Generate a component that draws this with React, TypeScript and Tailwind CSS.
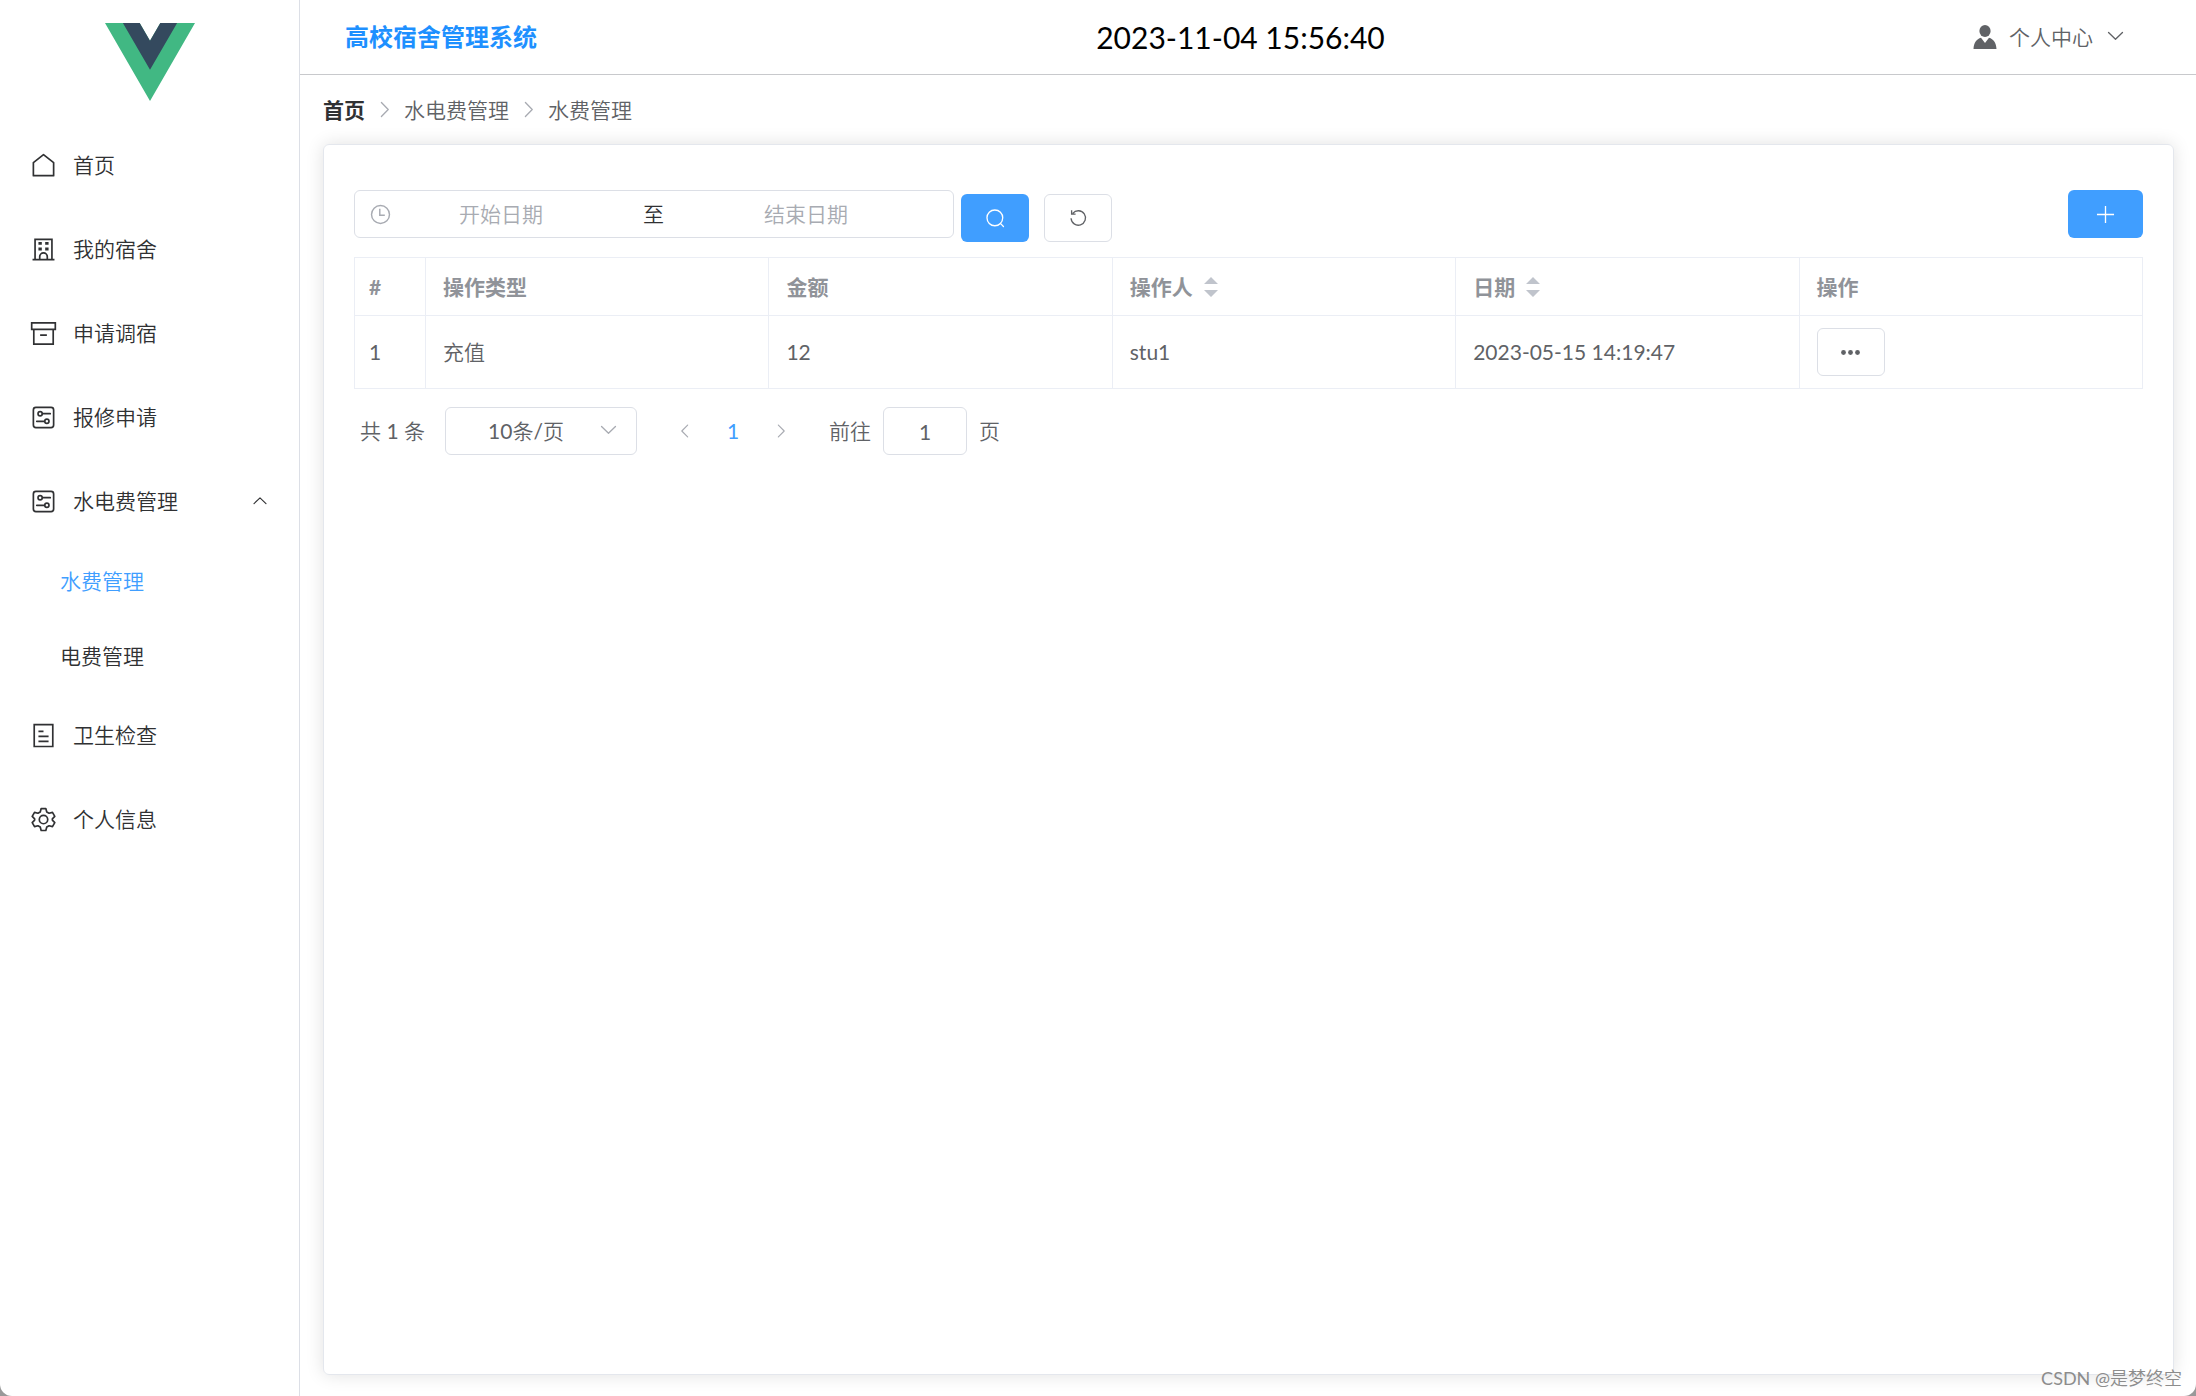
import { useState } from 'react';
import type { ReactNode } from 'react';

interface IconProps {
  children: ReactNode;
  className?: string;
  width?: number;
}

// 1024 grid outline icons
function Icon({ children, className = 'size-[27px]', width = 64 }: IconProps) {
  return (
    <svg
      viewBox="0 0 1024 1024"
      className={`shrink-0 ${className}`}
      fill="none"
      stroke="currentColor"
      strokeWidth={width}
      aria-hidden="true"
    >
      {children}
    </svg>
  );
}

const HomeIcon = () => (
  <Icon>
    <path d="M128 896V400L512 100L896 400V896Z" strokeLinejoin="round" />
  </Icon>
);

const SchoolIcon = () => (
  <Icon>
    <path d="M192 896V128H832V896M96 896H928M368 896V784a144 144 0 0 1 288 0V896" />
    <path d="M320 280H448M576 280H704M320 490H448M576 490H704" strokeWidth="112" />
  </Icon>
);

const BoxIcon = () => (
  <Icon>
    <path d="M144 352V912H880V352M64 112H960V352H64ZM384 576H640" />
  </Icon>
);

const SetUpIcon = () => (
  <Icon>
    <rect x="128" y="128" width="768" height="768" rx="96" />
    <circle cx="384" cy="368" r="80" />
    <circle cx="640" cy="656" r="80" />
    <path d="M480 368H768M256 656H544" strokeLinecap="round" />
  </Icon>
);

const TicketsIcon = () => (
  <Icon>
    <path d="M160 96H864V928H160ZM320 352H512M320 544H704M320 736H704" />
  </Icon>
);

const SettingIcon = () => (
  <Icon>
    <path
      d="M424 96H600L636 224L724 274L852 242L940 394L848 490V534L940 630L852 782L724 750L636 800L600 928H424L388 800L300 750L172 782L84 630L176 534V490L84 394L172 242L300 274L388 224Z"
      strokeLinejoin="round"
    />
    <circle cx="512" cy="512" r="160" />
  </Icon>
);

const ChevronDown = ({ className }: { className: string }) => (
  <Icon className={className}>
    <path d="M172 362L512 694L852 362" strokeLinecap="round" strokeLinejoin="round" />
  </Icon>
);

const ChevronUp = ({ className }: { className: string }) => (
  <Icon className={className}>
    <path d="M172 662L512 330L852 662" strokeLinecap="round" strokeLinejoin="round" />
  </Icon>
);

const ChevronRight = ({ className }: { className: string }) => (
  <Icon className={className}>
    <path d="M362 172L694 512L362 852" strokeLinecap="round" strokeLinejoin="round" />
  </Icon>
);

const ChevronLeft = ({ className }: { className: string }) => (
  <Icon className={className}>
    <path d="M662 172L330 512L662 852" strokeLinecap="round" strokeLinejoin="round" />
  </Icon>
);

function VueLogo() {
  return (
    <svg viewBox="0 0 262 227" className="h-[78px] w-[90px]" aria-label="Vue">
      <path d="M161 0L131 52L101 0H0L131 227L262 0Z" fill="#41b883" />
      <path d="M161 0L131 52L101 0H52L131 136L210 0Z" fill="#34495e" />
    </svg>
  );
}

function SortCaret() {
  return (
    <button type="button" aria-label="排序" className="flex w-9 justify-center text-[#c0c4cc]">
      <svg viewBox="0 0 14 20" className="h-5 w-[14px]" fill="currentColor">
        <path d="M7 0L14 7H0ZM7 20L0 13H14Z" />
      </svg>
    </button>
  );
}

const menuItems = [
  { label: '首页', icon: HomeIcon },
  { label: '我的宿舍', icon: SchoolIcon },
  { label: '申请调宿', icon: BoxIcon },
  { label: '报修申请', icon: SetUpIcon },
  { label: '水电费管理', icon: SetUpIcon, children: ['水费管理', '电费管理'] },
  { label: '卫生检查', icon: TicketsIcon },
  { label: '个人信息', icon: SettingIcon },
];

const records = [
  { id: 1, type: '充值', amount: '12', operator: 'stu1', date: '2023-05-15 14:19:47' },
];

function Sidebar() {
  const [open, setOpen] = useState(true);
  const [active, setActive] = useState('水费管理');

  return (
    <aside className="w-[300px] shrink-0 border-r border-[#dcdfe6]">
      <div className="flex h-[123px] justify-center pt-[23px]">
        <VueLogo />
      </div>
      <ul className="text-[#303133]">
        {menuItems.map(({ label, icon: ItemIcon, children }) => (
          <li key={label}>
            {children ? (
              <button
                type="button"
                onClick={() => setOpen(!open)}
                className="flex h-[84px] w-full items-center gap-4 px-[30px]"
              >
                <ItemIcon />
                <span className="flex-1 text-left">{label}</span>
                {open ? <ChevronUp className="size-[18px]" /> : <ChevronDown className="size-[18px]" />}
              </button>
            ) : (
              <a href="#" className="flex h-[84px] items-center gap-4 px-[30px]">
                <ItemIcon />
                <span>{label}</span>
              </a>
            )}
            {children && open && (
              <ul>
                {children.map((child) => (
                  <li key={child}>
                    <a
                      href="#"
                      onClick={() => setActive(child)}
                      className={`flex h-[75px] items-center pl-[60px] ${active === child ? 'text-[#409eff]' : ''}`}
                    >
                      {child}
                    </a>
                  </li>
                ))}
              </ul>
            )}
          </li>
        ))}
      </ul>
    </aside>
  );
}

function Header() {
  return (
    <header className="grid h-[75px] grid-cols-3 items-center border-b border-[#c8c9cc] pr-[60px] pl-[45px]">
      <h1 className="font-['Lato','Noto_Sans_CJK_SC',sans-serif] text-2xl font-bold text-[#1e90ff]">高校宿舍管理系统</h1>
      <time className="text-center text-3xl text-black">2023-11-04 15:56:40</time>
      <button type="button" className="mr-[10px] flex items-center justify-self-end text-[#606266]">
        <svg viewBox="0 0 24 24" className="mr-3 size-6" fill="currentColor" aria-hidden="true">
          <ellipse cx="12" cy="6" rx="5.6" ry="6" />
          <path d="M0.5 24C0.8 18 3.5 14 8 12.8L12 18L16 12.8C20.500 14 23.200 18 23.500 24Z" />
        </svg>
        个人中心
        <ChevronDown className="mb-1 ml-3 size-[21px]" />
      </button>
    </header>
  );
}

function Breadcrumb() {
  return (
    <nav className="flex h-[69px] items-center pl-[23px] text-[#606266]" aria-label="breadcrumb">
      <a href="#" className="font-['Lato','Noto_Sans_CJK_SC',sans-serif] font-bold text-[#303133]">首页</a>
      <ChevronRight className="mx-[9px] size-[21px] text-[#a8abb2]" />
      <span>水电费管理</span>
      <ChevronRight className="mx-[9px] size-[21px] text-[#a8abb2]" />
      <span>水费管理</span>
    </nav>
  );
}

function Toolbar() {
  return (
    <div className="flex h-[67px] items-start">
      <div className="flex h-12 w-[600px] items-center rounded-md border border-[#dcdfe6] px-[14px]">
        <Icon className="-mr-2 size-[23px] text-[#a8abb2]">
          <circle cx="512" cy="512" r="400" />
          <path d="M480 256V544H704" />
        </Icon>
        <input
          type="text"
          aria-label="开始日期"
          placeholder="开始日期"
          className="w-[234px] text-center outline-none placeholder:text-[#a8abb2]"
        />
        <span className="flex-1 text-center text-[#303133]">至</span>
        <input
          type="text"
          aria-label="结束日期"
          placeholder="结束日期"
          className="mr-4 w-[234px] text-center outline-none placeholder:text-[#a8abb2]"
        />
      </div>
      <button
        type="button"
        aria-label="搜索"
        className="mt-1 ml-[7px] flex h-12 w-[68px] items-center justify-center rounded-md bg-[#409eff] text-white"
      >
        <Icon className="size-[21px]">
          <circle cx="480" cy="480" r="384" />
          <path d="M750 750L900 900" strokeLinecap="round" />
        </Icon>
      </button>
      <button
        type="button"
        aria-label="重置"
        className="mt-1 ml-[15px] flex h-12 w-[68px] items-center justify-center rounded-md border border-[#dcdfe6] text-[#606266]"
      >
        <Icon className="size-[21px]">
          <path d="M232 260A352 352 0 1 1 150 500M176 110V300H370" />
        </Icon>
      </button>
      <button
        type="button"
        aria-label="新增"
        className="ml-auto flex h-12 w-[75px] items-center justify-center rounded-md bg-[#409eff] text-white"
      >
        <Icon className="size-[21px]">
          <path d="M512 96V928M96 512H928" />
        </Icon>
      </button>
    </div>
  );
}

function RecordTable() {
  return (
    <table className="w-full table-fixed border-collapse text-left text-[#606266] [&_td]:border [&_td]:border-[#ebeef5] [&_th]:border [&_th]:border-[#ebeef5]">
      <thead className="font-['Lato','Noto_Sans_CJK_SC',sans-serif]">
        <tr className="h-[58px] text-[#909399]">
          <th className="w-[71px] pl-[14px]">#</th>
          <th className="pl-[17px]">操作类型</th>
          <th className="pl-[17px]">金额</th>
          <th className="pl-[17px]">
            <div className="flex items-center">操作人<SortCaret /></div>
          </th>
          <th className="pl-[17px]">
            <div className="flex items-center">日期<SortCaret /></div>
          </th>
          <th className="pl-[17px]">操作</th>
        </tr>
      </thead>
      <tbody>
        {records.map((row) => (
          <tr key={row.id} className="h-[73px]">
            <td className="pl-[14px]">{row.id}</td>
            <td className="pl-[17px]">{row.type}</td>
            <td className="pl-[17px]">{row.amount}</td>
            <td className="pl-[17px]">{row.operator}</td>
            <td className="pl-[17px]">{row.date}</td>
            <td className="pl-[17px]">
              <button
                type="button"
                aria-label="更多"
                className="flex h-12 w-[68px] items-center justify-center rounded-md border border-[#dcdfe6]"
              >
                <svg viewBox="0 0 21 21" className="size-[21px]" fill="currentColor">
                  <circle cx="3.500" cy="10.500" r="2.400" />
                  <circle cx="10.500" cy="10.500" r="2.400" />
                  <circle cx="17.500" cy="10.500" r="2.400" />
                </svg>
              </button>
            </td>
          </tr>
        ))}
      </tbody>
    </table>
  );
}

function Pagination() {
  return (
    <div className="mt-[18px] flex h-12 items-center pl-[6px] text-[#606266]">
      <span className="w-[85px]">共 1 条</span>
      <div className="relative">
        <select
          aria-label="每页条数"
          className="h-12 w-[192px] appearance-none rounded-md border border-[#dcdfe6] pr-[30px] text-center [text-align-last:center]"
        >
          <option>10条/页</option>
          <option>20条/页</option>
        </select>
        <ChevronDown className="pointer-events-none absolute top-3 right-[18px] size-[21px] text-[#a8abb2]" />
      </div>
      <button type="button" aria-label="上一页" className="ml-6 flex w-12 justify-center text-[#a8abb2]">
        <ChevronLeft className="size-[18px]" />
      </button>
      <button type="button" className="w-12 text-[#409eff]">1</button>
      <button type="button" aria-label="下一页" className="flex w-12 justify-center text-[#a8abb2]">
        <ChevronRight className="size-[18px]" />
      </button>
      <label htmlFor="page" className="ml-6">前往</label>
      <input
        id="page"
        type="text"
        defaultValue="1"
        className="mx-3 h-12 w-[84px] rounded-md border border-[#dcdfe6] text-center"
      />
      <span>页</span>
    </div>
  );
}

export default function App() {
  return (
    <div className="min-h-screen bg-[#999999]">
      <div className="relative flex min-h-screen rounded-b-xl bg-white font-['Lato','Noto_Sans_CJK_SC_DemiLight','Noto_Sans_CJK_SC',sans-serif] text-[21px] leading-[30px] font-normal">
        <Sidebar />
        <div className="flex min-w-0 flex-1 flex-col">
          <Header />
          <Breadcrumb />
          <main className="mr-[22px] mb-[21px] ml-[23px] flex-1 rounded-md border border-[#e4e7ed] px-[30px] pt-[45px] shadow-[0_0_18px_rgba(0,0,0,0.12)]">
            <Toolbar />
            <RecordTable />
            <Pagination />
          </main>
        </div>
        <span className="absolute right-[14px] bottom-1 text-lg text-[#8c8c8c]">CSDN @是梦终空</span>
      </div>
    </div>
  );
}
